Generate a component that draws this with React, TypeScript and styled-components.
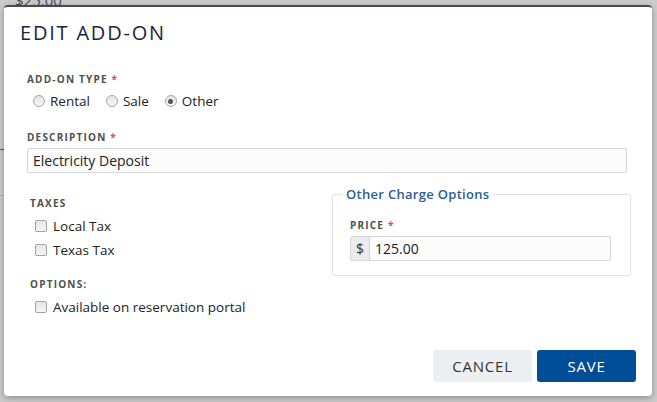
import React from 'react';
import styled, { createGlobalStyle } from 'styled-components';

const GlobalStyle = createGlobalStyle`
  html, body {
    margin: 0;
    padding: 0;
    background: #cbcbcb;
  }
  body {
    font-family: 'Open Sans', 'Liberation Sans', sans-serif;
    color: #222;
  }
  * {
    box-sizing: border-box;
  }
`;

const typeOptions = ['Rental', 'Sale', 'Other'];
const taxes = ['Local Tax', 'Texas Tax'];

function App() {
  return (
    <>
      <GlobalStyle />
      <Page>
        <Backdrop>
          <BehindAmount>$25.00</BehindAmount>
          <BehindRule />
          <BehindDivider />
        </Backdrop>
        <Modal>
          <Header>
            <Title>EDIT ADD-ON</Title>
          </Header>
          <Body>
            <FieldLabel>
              ADD-ON TYPE <Required>*</Required>
            </FieldLabel>
            <RadioGroup>
              {typeOptions.map((option) => (
                <RadioItem key={option}>
                  <RadioDot checked={option === 'Other'} />
                  {option}
                </RadioItem>
              ))}
            </RadioGroup>

            <FieldLabel spaced>
              DESCRIPTION <Required>*</Required>
            </FieldLabel>
            <TextInput>Electricity Deposit</TextInput>

            <Columns>
              <LeftColumn>
                <FieldLabel>TAXES</FieldLabel>
                <CheckList>
                  {taxes.map((tax) => (
                    <CheckRow key={tax}>
                      <CheckBox />
                      {tax}
                    </CheckRow>
                  ))}
                </CheckList>
                <FieldLabel spacedSmall>OPTIONS:</FieldLabel>
                <CheckList>
                  <CheckRow>
                    <CheckBox />
                    Available on reservation portal
                  </CheckRow>
                </CheckList>
              </LeftColumn>

              <ChargeBox>
                <Legend>Other Charge Options</Legend>
                <ChargeBody>
                  <FieldLabel>
                    PRICE <Required>*</Required>
                  </FieldLabel>
                  <InputGroup>
                    <Addon>$</Addon>
                    <GroupValue>125.00</GroupValue>
                  </InputGroup>
                </ChargeBody>
              </ChargeBox>
            </Columns>
          </Body>
          <Footer>
            <Button>CANCEL</Button>
            <Button primary>SAVE</Button>
          </Footer>
        </Modal>
      </Page>
    </>
  );
}

const Page = styled.div`
  position: relative;
  width: 657px;
  height: 402px;
  overflow: hidden;
  background: #cbcbcb;
`;

const Backdrop = styled.div`
  height: 100%;
  color: #4a4a4a;
`;

const BehindAmount = styled.div`
  margin: -9px 0 0 15px;
  font-size: 15px;
  line-height: 18px;
`;

const BehindRule = styled.div`
  margin-top: 140px;
  height: 1px;
  width: 8px;
  background: #5a5a5a;
`;

const BehindDivider = styled.div`
  margin-top: 45px;
  height: 1px;
  width: 8px;
  background: #b0b0b0;
`;

const Modal = styled.div`
  position: absolute;
  left: 4px;
  top: 5px;
  width: 648px;
  background: #fff;
  border-top: 2px solid #454c59;
  border-radius: 4px;
  box-shadow: 0 2px 6px rgba(0, 0, 0, 0.3);
`;

const Header = styled.div`
  padding: 12px 16px 0;
`;

const Title = styled.h1`
  margin: 0;
  font-size: 20px;
  line-height: 28px;
  font-weight: 400;
  letter-spacing: 1.8px;
  color: #1b2540;
`;

const Body = styled.div`
  padding: 25px 25px 0 23px;
`;

const FieldLabel = styled.div<{ spaced?: boolean; spacedSmall?: boolean }>`
  margin-top: ${(p) => (p.spaced ? '20px' : p.spacedSmall ? '15px' : '0')};
  font-size: 10px;
  line-height: 14px;
  font-weight: 700;
  letter-spacing: 1.2px;
  color: #4f4f4f;
`;

const Required = styled.span`
  color: #d9534f;
`;

const RadioGroup = styled.div`
  display: flex;
  gap: 10px;
  margin-top: 6px;
`;

const RadioItem = styled.label`
  display: inline-flex;
  align-items: center;
  gap: 5px;
  padding-left: 6px;
  font-size: 13.5px;
  line-height: 18px;
  color: #222;
`;

const RadioDot = styled.span<{ checked?: boolean }>`
  position: relative;
  width: 12px;
  height: 12px;
  border-radius: 50%;
  border: 1px solid #a6a6a6;
  background: linear-gradient(#e4e4e4, #f7f7f7);

  &::after {
    content: '';
    display: ${(p) => (p.checked ? 'block' : 'none')};
    position: absolute;
    left: 2.5px;
    top: 2.5px;
    width: 5px;
    height: 5px;
    border-radius: 50%;
    background: #555;
  }
`;

const TextInput = styled.div`
  margin-top: 4px;
  height: 25px;
  padding: 0 5px;
  border: 1px solid #d8d8d8;
  border-radius: 2px;
  background: #fcfcfc;
  font-size: 14px;
  line-height: 23px;
  color: #222;
`;

const Columns = styled.div`
  display: grid;
  grid-template-columns: 1fr 299px;
  align-items: start;
  column-gap: 6px;
  margin: 12px -4px 0 0;
`;

const LeftColumn = styled.div`
  padding: 11px 0 0 3px;
`;

const CheckList = styled.div`
  margin-top: 4px;
`;

const CheckRow = styled.label`
  display: flex;
  align-items: center;
  gap: 6px;
  padding-left: 5px;
  height: 24px;
  font-size: 13.5px;
  color: #222;
`;

const CheckBox = styled.span`
  width: 12px;
  height: 12px;
  border: 1px solid #a3a3a3;
  border-radius: 2px;
  background: linear-gradient(#e6e6e6, #f5f5f5);
`;

const ChargeBox = styled.fieldset`
  margin: 0;
  padding: 0 0 14px 9px;
  border: 1px solid #e2e2e2;
  border-radius: 3px;
  min-width: 0;
`;

const Legend = styled.legend`
  padding: 0 4px;
  font-size: 13px;
  line-height: 18px;
  font-weight: 600;
  letter-spacing: 0.3px;
  color: #2d5b98;
`;

const ChargeBody = styled.div`
  padding: 15px 19px 0 8px;
`;

const InputGroup = styled.div`
  display: flex;
  margin-top: 4px;
  height: 25px;
  border: 1px solid #d6d6d6;
  border-radius: 2px;
  background: #fcfcfc;
`;

const Addon = styled.span`
  width: 19px;
  text-align: center;
  background: #ebebeb;
  border-right: 1px solid #d6d6d6;
  font-size: 14px;
  line-height: 23px;
  color: #333;
`;

const GroupValue = styled.span`
  padding-left: 5px;
  font-size: 14px;
  line-height: 23px;
  color: #222;
`;

const Footer = styled.div`
  display: flex;
  justify-content: flex-end;
  gap: 5px;
  padding: 31px 16px 14px;
`;

const Button = styled.button<{ primary?: boolean }>`
  width: 99px;
  height: 32px;
  border: none;
  border-radius: 3px;
  font-family: 'Open Sans', 'Liberation Sans', sans-serif;
  font-size: 15px;
  letter-spacing: 0.8px;
  background: ${(p) => (p.primary ? '#004e98' : '#eceff1')};
  color: ${(p) => (p.primary ? '#fff' : '#333')};
`;

export default App;
